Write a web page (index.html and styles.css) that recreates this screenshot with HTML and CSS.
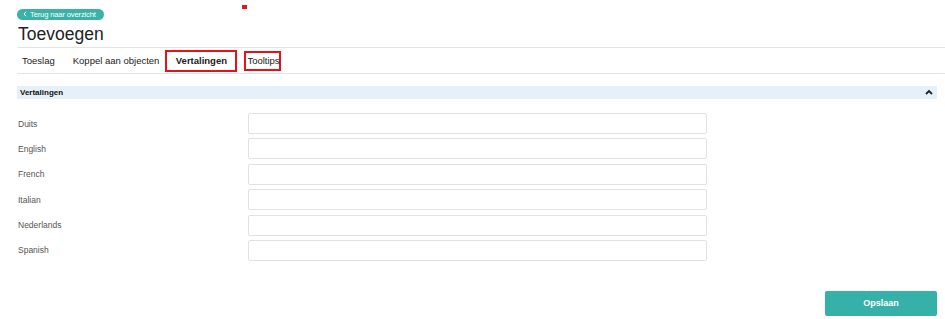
FILE: index.html
```html
<!DOCTYPE html>
<html lang="nl">
<head>
<meta charset="utf-8">
<title>Toevoegen</title>
<link rel="stylesheet" href="styles.css">
</head>
<body>
<div class="page">
  <div class="topbar">
    <a class="back" href="#"><svg class="chev" width="4" height="6" viewBox="0 0 4 6"><path d="M3 0.8 L1 3 L3 5.2" fill="none" stroke="#fff" stroke-width="1"/></svg> Terug naar overzicht</a>
    <span class="mark"></span>
  </div>
  <h1 class="title">Toevoegen</h1>
  <nav class="tabs">
    <span class="tab t1">Toeslag</span>
    <span class="tab t2">Koppel aan objecten</span>
    <span class="tab t3 active boxed">Vertalingen</span>
    <span class="tab t4 boxed small">Tooltips</span>
  </nav>
  <div class="section">
    <span>Vertalingen</span>
    <svg class="caret" width="8" height="6" viewBox="0 0 8 6"><path d="M1 5 L4 2 L7 5" fill="none" stroke="#222" stroke-width="1.8"/></svg>
  </div>
  <div class="form">
    <div class="row"><label>Duits</label><input type="text"></div>
    <div class="row"><label>English</label><input type="text"></div>
    <div class="row"><label>French</label><input type="text"></div>
    <div class="row"><label>Italian</label><input type="text"></div>
    <div class="row"><label>Nederlands</label><input type="text"></div>
    <div class="row"><label>Spanish</label><input type="text"></div>
  </div>
  <div class="actions">
    <button class="save">Opslaan</button>
  </div>
</div>
</body>
</html>
```
FILE: styles.css
```css
* { box-sizing: border-box; }
html, body { margin: 0; padding: 0; background: #fff; }
body { font-family: "Liberation Sans", Arial, sans-serif; color: #222; }
.page { padding: 3px 8px 0 17px; position: relative; }
.topbar { height: 11px; position: relative; }
.back {
  display: inline-flex; align-items: center; gap: 3px;
  height: 11px; width: 87px; padding: 0 4px 0 6px;
  border-radius: 6px; background: #3ab2a7; color: #fff;
  font-size: 7.6px; text-decoration: none; white-space: nowrap; letter-spacing: -0.15px;
}
.chev { flex: none; }
.mark { position: absolute; left: 225px; top: 2px; width: 5px; height: 4px; background: #e8141c; }
.title {
  margin: 9px 0 0 1px; font-size: 17.5px; font-weight: normal; line-height: 22px; color: #222;
  padding-bottom: 2px; border-bottom: 1px solid #e4e4e4; margin-right: -8px;
}
.tabs {
  display: flex; align-items: center; height: 26px;
  border-bottom: 1px solid #e4e4e4; margin-right: -8px;
  font-size: 9.5px; color: #222;
}
.tab { display: inline-flex; align-items: center; justify-content: center; white-space: nowrap; }
.t1 { margin-left: 5px; }
.t2 { margin-left: 18px; }
.t3 { margin-left: 6px; width: 72px; height: 22px; font-weight: bold; }
.t4 { margin-left: 7px; width: 37px; height: 20px; justify-content: flex-start; padding-left: 1px; }
.boxed { border: 2px solid #e3121b; }
.section {
  margin-top: 12px; height: 13px; background: #e6f0f8;
  display: flex; align-items: center; justify-content: space-between;
  padding: 0 4px 0 3px; font-size: 8px; font-weight: bold; color: #111;
}
.caret { margin-top: -1px; }
.form { margin-top: 14px; display: flex; flex-direction: column; gap: 4.4px; }
.row { display: flex; align-items: center; height: 21px; }
.row label { width: 231px; font-size: 8.5px; color: #555; padding-left: 1px; }
.row input {
  width: 459px; height: 21px; border: 1px solid #e2e2e2; border-radius: 2px; background: #fff;
}
.actions { display: flex; justify-content: flex-end; margin-top: 30px; }
.save {
  width: 112px; height: 25px; border: none; border-radius: 2px;
  background: #35b1aa; color: #fff; font-family: inherit; font-size: 9px; font-weight: bold;
}
```
